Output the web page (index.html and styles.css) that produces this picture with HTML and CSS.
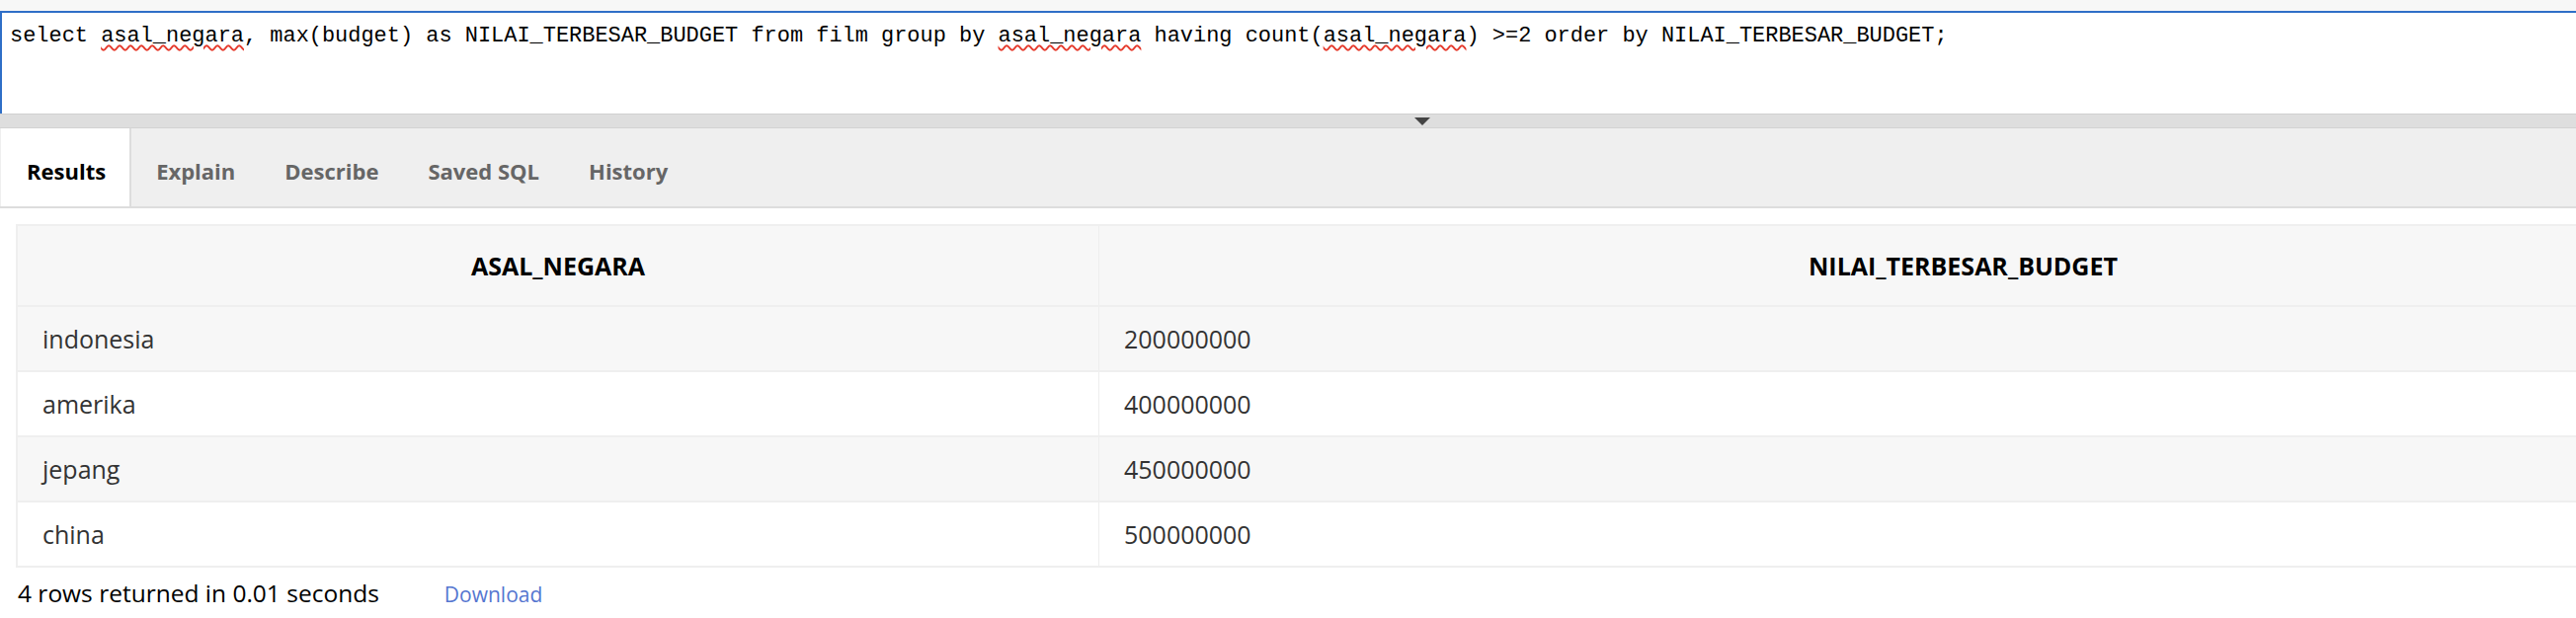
FILE: index.html
```html
<!DOCTYPE html>
<html>
<head>
<meta charset="utf-8">
<link rel="stylesheet" href="styles.css">
</head>
<body>
<div class="page">
  <div class="top-strip"></div>
  <div class="editor">
    <div class="code">select <span class="spell">asal_negara</span>, max(budget) as NILAI_TERBESAR_BUDGET from film group by <span class="spell">asal_negara</span> having count(<span class="spell">asal_negara</span>) &gt;=2 order by NILAI_TERBESAR_BUDGET;</div>
  </div>
  <div class="splitter"><span class="arrow"></span></div>
  <div class="tabs">
    <div class="tab active">Results</div>
    <div class="tab">Explain</div>
    <div class="tab">Describe</div>
    <div class="tab">Saved SQL</div>
    <div class="tab">History</div>
  </div>
  <div class="results">
    <table class="grid">
      <thead>
        <tr><th class="col1">ASAL_NEGARA</th><th>NILAI_TERBESAR_BUDGET</th></tr>
      </thead>
      <tbody>
        <tr class="odd"><td>indonesia</td><td>200000000</td></tr>
        <tr><td>amerika</td><td>400000000</td></tr>
        <tr class="odd"><td>jepang</td><td>450000000</td></tr>
        <tr><td>china</td><td>500000000</td></tr>
      </tbody>
    </table>
    <div class="footer">
      <span class="count">4 rows returned in 0.01 seconds</span>
      <a class="download" href="#">Download</a>
    </div>
  </div>
</div>
</body>
</html>
```

FILE: styles.css
```css
html, body {
  margin: 0;
  padding: 0;
  overflow: hidden;
  background: #ffffff;
}
.page {
  width: 2880px;
  font-family: "Open Sans", "Noto Sans", sans-serif;
}
.top-strip {
  height: 11px;
  background: #f7f7f7;
}
.editor {
  border-top: 2px solid #2f6fc7;
  border-left: 2px solid #2f6fc7;
  background: #ffffff;
  padding: 11px 8px 0 8px;
  box-sizing: border-box;
  height: 104px;
}
.code {
  font-family: "Liberation Mono", monospace;
  font-size: 21.95px;
  line-height: 1.2;
  color: #000;
  white-space: nowrap;
}
.spell {
  text-decoration: underline wavy #e5392b;
  text-decoration-thickness: 1.5px;
  text-underline-offset: 3px;
}
.splitter {
  height: 13px;
  background: #dedede;
  border-top: 1px solid #d0d0d0;
  border-bottom: 1px solid #d3d3d3;
  display: flex;
  justify-content: center;
  align-items: center;
}
.arrow {
  width: 0;
  height: 0;
  border-left: 8px solid transparent;
  border-right: 8px solid transparent;
  border-top: 8px solid #444;
}
.tabs {
  display: flex;
  height: 79px;
  background: #efefef;
  border-bottom: 2px solid #dddddd;
  padding-left: 1px;
}
.tab {
  padding: 6px 25px 0 25px;
  font-size: 22px;
  font-weight: 700;
  color: #666;
  display: flex;
  align-items: center;
  box-sizing: border-box;
}
.tab.active {
  background: #ffffff;
  color: #000;
  border-right: 2px solid #dddddd;
  padding-left: 26px;
  padding-right: 24px;
}
.results {
  padding: 16px 16px 0 16px;
}
.grid {
  width: 100%;
  border-collapse: collapse;
  border: 2px solid #efefef;
}
.grid th, .grid td {
  border-top: 2px solid #efefef;
  border-bottom: 2px solid #efefef;
  border-left: 1px solid #eeeeee;
  border-right: 1px solid #eeeeee;
}
.grid th {
  height: 80px;
  font-size: 25px;
  font-weight: 700;
  color: #000;
  background: #f7f7f7;
  text-align: center;
  padding: 0;
}
.grid th.col1 {
  width: 1094px;
}
.grid td {
  height: 64px;
  padding: 0 25px;
  font-size: 25px;
  color: #333;
  text-align: left;
}
.grid tr.odd td {
  background: #f7f7f7;
}
.footer {
  display: flex;
  align-items: baseline;
  padding: 9px 0 0 2px;
}
.count {
  font-size: 24.5px;
  color: #000;
}
.download {
  margin-left: 66px;
  font-size: 21px;
  color: #5576d0;
  text-decoration: none;
}
```
